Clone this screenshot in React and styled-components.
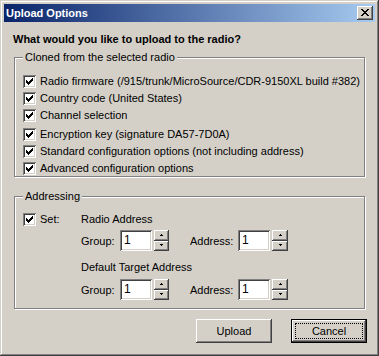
import React from 'react';
import styled, { createGlobalStyle } from 'styled-components';

const GlobalStyle = createGlobalStyle`
  html, body {
    margin: 0;
    padding: 0;
    background: #d4d0c8;
  }
  body {
    font-family: "Liberation Sans", Arial, sans-serif;
    font-size: 11px;
    color: #000;
  }
`;

const raised = `
  box-shadow: inset -1px -1px #404040, inset 1px 1px #fff,
    inset -2px -2px #808080, inset 2px 2px #d4d0c8;
`;

const sunken = `
  box-shadow: inset 1px 1px #808080, inset -1px -1px #fff,
    inset 2px 2px #404040, inset -2px -2px #d4d0c8;
`;

const Window = styled.div`
  width: 379px;
  height: 356px;
  box-sizing: border-box;
  padding: 4px;
  background: #d4d0c8;
  box-shadow: inset -1px -1px #404040, inset 1px 1px #d4d0c8,
    inset -2px -2px #808080, inset 2px 2px #fff;
  display: flex;
  flex-direction: column;
`;

const TitleBar = styled.div`
  height: 18px;
  display: flex;
  align-items: center;
  justify-content: space-between;
  padding: 0 2px;
  background: linear-gradient(to right, #0a246a, #a6caf0);
`;

const TitleText = styled.span`
  color: #fff;
  font-weight: bold;
  font-size: 11px;
  line-height: 18px;
`;

const CloseButton = styled.div`
  width: 16px;
  height: 14px;
  background: #d4d0c8;
  ${raised}
  display: flex;
  align-items: flex-start;
  justify-content: flex-start;
  svg {
    margin: 3px 0 0 4px;
  }
`;

const Content = styled.div`
  flex: 1;
  display: flex;
  flex-direction: column;
  padding: 11px 10px 0 10px;
`;

const Heading = styled.div`
  font-weight: bold;
  line-height: 13px;
  margin-left: -1px;
`;

const GroupBox = styled.div`
  position: relative;
  box-sizing: border-box;
  height: ${p => p.$height}px;
  margin-top: ${p => p.$top}px;
  border: 1px solid #808080;
  box-shadow: inset 1px 1px #fff, 1px 1px #fff;
  padding: ${p => p.$padTop}px 8px 0 8px;
`;

const Caption = styled.span`
  position: absolute;
  top: -8px;
  left: 8px;
  padding: 0 2px;
  background: #d4d0c8;
  line-height: 14px;
`;

const CheckRow = styled.div`
  display: flex;
  align-items: center;
  height: 17px;
  margin-top: ${p => p.$top || 0}px;
`;

const Box = styled.span`
  width: 13px;
  height: 13px;
  flex: none;
  box-sizing: border-box;
  background: #fff;
  ${sunken}
  position: relative;
  svg {
    position: absolute;
    left: 3px;
    top: 3px;
  }
`;

const Label = styled.span`
  margin-left: 4px;
  white-space: nowrap;
  line-height: 13px;
`;

const AddrLayout = styled.div`
  display: flex;
`;

const SetColumn = styled.div`
  width: 58px;
  flex: none;
  display: flex;
  align-items: flex-start;
  height: 17px;
`;

const SetInner = styled.div`
  display: flex;
  align-items: center;
  height: 13px;
`;

const AddrColumn = styled.div`
  display: flex;
  flex-direction: column;
`;

const SubHeading = styled.div`
  line-height: 13px;
  height: ${p => p.$height}px;
  padding-top: ${p => p.$padTop || 0}px;
  box-sizing: border-box;
`;

const FieldRow = styled.div`
  display: flex;
  align-items: center;
  height: 21px;
`;

const FieldLabel = styled.span`
  width: ${p => p.$width}px;
  flex: none;
  white-space: nowrap;
`;

const Input = styled.div`
  width: 32px;
  height: 21px;
  box-sizing: border-box;
  background: #fff;
  ${sunken}
  padding: 3px 0 0 4px;
  line-height: 14px;
  font-size: 12px;
`;

const Spin = styled.div`
  display: flex;
  flex-direction: column;
  width: ${p => p.$width}px;
  height: 21px;
  margin-left: 2px;
  margin-right: ${p => p.$gap || 0}px;
  flex: none;
`;

const SpinButton = styled.div`
  flex: 1;
  background: #d4d0c8;
  ${raised}
  display: flex;
  align-items: center;
  justify-content: center;
`;

const ButtonRow = styled.div`
  display: flex;
  justify-content: flex-end;
  gap: 19px;
  margin-top: 10px;
  margin-right: -2px;
`;

const Button = styled.div`
  position: relative;
  width: 76px;
  height: 24px;
  box-sizing: border-box;
  background: #d4d0c8;
  display: flex;
  align-items: center;
  justify-content: center;
  ${p =>
    p.$default
      ? `box-shadow: inset 0 0 0 1px #000, inset -2px -2px #404040, inset 2px 2px #fff,
    inset -3px -3px #808080, inset 3px 3px #d4d0c8;`
      : raised}
`;

const Focus = styled.span`
  position: absolute;
  inset: 4px;
  border: 1px dotted #000;
`;

const Check = () => (
  <svg width="7" height="7" viewBox="0 0 7 7" shapeRendering="crispEdges">
    <path
      d="M6 0h1v3h-1zM5 1h1v3h-1zM4 2h1v3h-1zM3 3h1v3h-1zM2 4h1v3h-1zM1 3h1v3h-1zM0 2h1v3h-1z"
      fill="#000"
    />
  </svg>
);

const CloseGlyph = () => (
  <svg width="8" height="7" viewBox="0 0 8 7" shapeRendering="crispEdges">
    <path
      d="M0 0h2v1h-2zM6 0h2v1h-2zM1 1h2v1h-2zM5 1h2v1h-2zM2 2h4v1h-4zM3 3h2v1h-2zM2 4h4v1h-4zM1 5h2v1h-2zM5 5h2v1h-2zM0 6h2v1h-2zM6 6h2v1h-2z"
      fill="#000"
    />
  </svg>
);

const Arrow = ({ up }) => (
  <svg width="5" height="3" viewBox="0 0 5 3" shapeRendering="crispEdges">
    <path d={up ? 'M2 0h1v1h-1zM1 1h3v1h-3z' : 'M1 0h3v1h-3zM2 1h1v1h-1z'} fill="#000" />
  </svg>
);

const CheckBox = ({ label, top }) => (
  <CheckRow $top={top}>
    <Box>
      <Check />
    </Box>
    <Label>{label}</Label>
  </CheckRow>
);

const SpinField = ({ label, labelWidth, spinWidth, gap }) => (
  <>
    <FieldLabel $width={labelWidth}>{label}</FieldLabel>
    <Input>1</Input>
    <Spin $width={spinWidth} $gap={gap}>
      <SpinButton>
        <Arrow up />
      </SpinButton>
      <SpinButton>
        <Arrow />
      </SpinButton>
    </Spin>
  </>
);

const AddressRow = () => (
  <FieldRow>
    <SpinField label="Group:" labelWidth={39} spinWidth={15} gap={21} />
    <SpinField label="Address:" labelWidth={48} spinWidth={16} />
  </FieldRow>
);

// the fourth row sits 2px lower than the regular 17px step
const cloned = [
  { text: 'Radio firmware (/915/trunk/MicroSource/CDR-9150XL build #382)' },
  { text: 'Country code (United States)' },
  { text: 'Channel selection' },
  { text: 'Encryption key (signature DA57-7D0A)', top: 2 },
  { text: 'Standard configuration options (not including address)' },
  { text: 'Advanced configuration options' },
];

const App = () => (
  <>
    <GlobalStyle />
    <Window>
      <TitleBar>
        <TitleText>Upload Options</TitleText>
        <CloseButton>
          <CloseGlyph />
        </CloseButton>
      </TitleBar>
      <Content>
        <Heading>What would you like to upload to the radio?</Heading>
        <GroupBox $top={11} $height={120} $padTop={15}>
          <Caption>Cloned from the selected radio</Caption>
          {cloned.map(item => (
            <CheckBox key={item.text} label={item.text} top={item.top} />
          ))}
        </GroupBox>
        <GroupBox $top={19} $height={113} $padTop={16}>
          <Caption>Addressing</Caption>
          <AddrLayout>
            <SetColumn>
              <SetInner>
                <Box>
                  <Check />
                </Box>
                <Label>Set:</Label>
              </SetInner>
            </SetColumn>
            <AddrColumn>
              <SubHeading $height={17}>Radio Address</SubHeading>
              <AddressRow />
              <SubHeading $height={28} $padTop={10}>
                Default Target Address
              </SubHeading>
              <AddressRow />
            </AddrColumn>
          </AddrLayout>
        </GroupBox>
        <ButtonRow>
          <Button>Upload</Button>
          <Button $default>
            Cancel
            <Focus />
          </Button>
        </ButtonRow>
      </Content>
    </Window>
  </>
);

export default App;
